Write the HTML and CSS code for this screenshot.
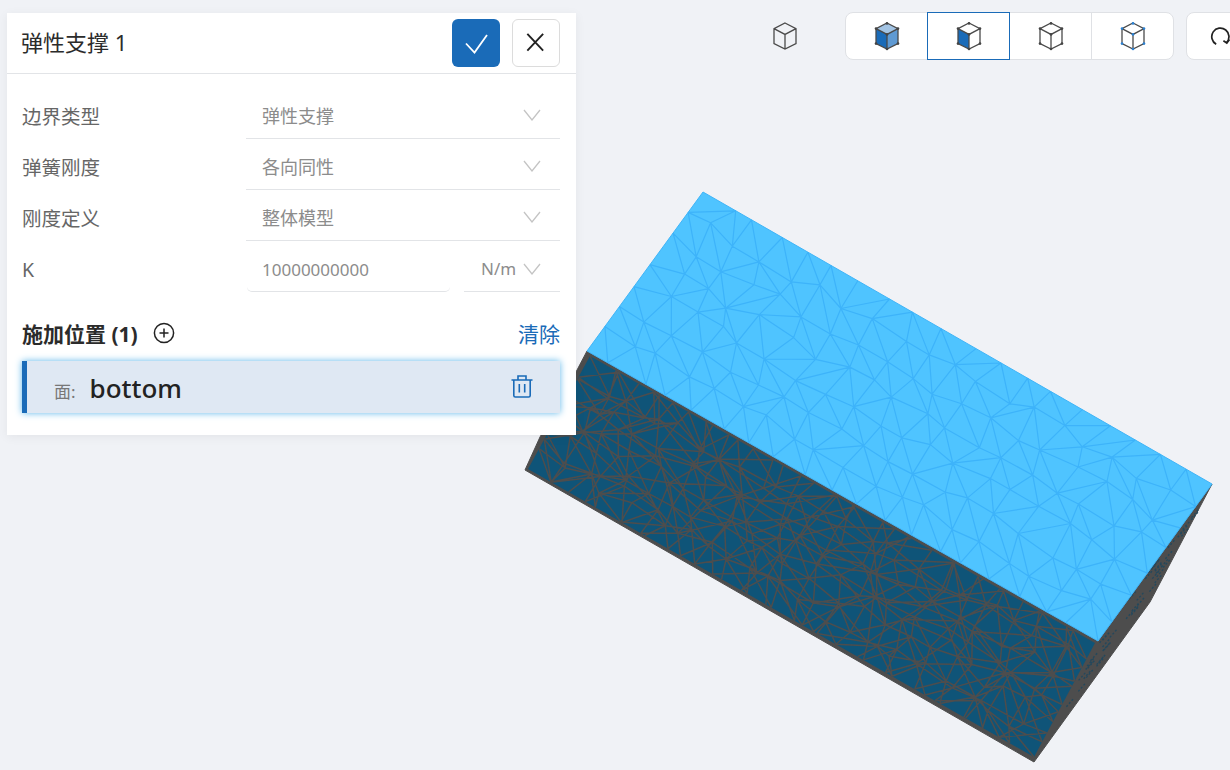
FILE: index.html
```html
<!DOCTYPE html>
<html lang="zh-CN">
<head>
  <meta charset="UTF-8" />
  <title>弹性支撑</title>
  <link rel="stylesheet" href="styles.css">
</head>
<body>

  <!-- 3d model -->
  <svg class="model" width="1230" height="770" viewBox="0 0 1230 770">
    <polygon class="side" points="587,351 1098,641 1212,484 1150,602 1034,762 525,470 540,437 576,372"/>
    <polygon id="frontFace" class="front" points="590,356 1095,643 1034,757 528,469"/>
    <path id="frontMesh" class="front-line"/>
    <path id="sideSpots" class="side-spot"/>
    <polygon class="top" points="587,351 703,192 1212,484 1098,641"/>
    <path id="topMesh" class="top-line"/>
  </svg>

  <!-- view toolbar -->
  <svg width="0" height="0" class="defs">
    <defs>
      <g id="cubeFrame">
        <path d="M12 1 23 6.6V21.6L12 27 1 21.6V6.6Z M1 6.6 12 12.4 23 6.6 M12 12.4V27"/>
      </g>
      <g id="cubeDots">
        <circle cx="12" cy="1.4" r="1.3"/><circle cx="23" cy="6.6" r="1.3"/><circle cx="23" cy="21.6" r="1.3"/>
        <circle cx="12" cy="27" r="1.3"/><circle cx="1" cy="21.6" r="1.3"/><circle cx="1" cy="6.6" r="1.3"/>
        <circle cx="12" cy="12.4" r="1.3"/>
      </g>
    </defs>
  </svg>

  <div class="view-bar">
    <svg class="cube cube-solo" viewBox="0 0 24 28"><use href="#cubeFrame"/></svg>
    <div class="view-group">
      <div class="view-cell">
        <svg class="cube" viewBox="0 0 24 28">
          <path class="f-top" d="M12 1 23 6.6 12 12.4 1 6.6Z"/>
          <path class="f-left" d="M1 6.6 12 12.4V27L1 21.6Z"/>
          <path class="f-right" d="M23 6.6 12 12.4V27L23 21.6Z"/>
          <use href="#cubeFrame"/><use href="#cubeDots" class="dots"/>
        </svg>
      </div>
      <div class="view-cell active">
        <svg class="cube" viewBox="0 0 24 28">
          <path class="f-left" d="M1 6.6 12 12.4V27L1 21.6Z"/>
          <use href="#cubeFrame"/><use href="#cubeDots" class="dots"/>
        </svg>
      </div>
      <div class="view-cell">
        <svg class="cube" viewBox="0 0 24 28"><use href="#cubeFrame"/><use href="#cubeDots" class="dots"/></svg>
      </div>
      <div class="view-cell">
        <svg class="cube" viewBox="0 0 24 28"><use href="#cubeFrame"/><use href="#cubeDots" class="dots blue"/></svg>
      </div>
    </div>
    <div class="spin-btn">
      <svg class="spin-icon" viewBox="0 0 24 24">
        <path d="M8.2 20.2A8.6 8.6 0 1 1 18.6 18.6"/>
        <path d="M21.4 15.6 18.8 19 15.4 16.8"/>
      </svg>
    </div>
  </div>

  <!-- settings panel -->
  <div class="panel">
    <div class="panel-head">
      <h2>弹性支撑 1</h2>
      <button class="btn-ok">
        <svg viewBox="0 0 48 48"><path d="M14 24.5 22.5 33.5 35 16"/></svg>
      </button>
      <button class="btn-close">
        <svg viewBox="0 0 48 48"><path d="M16 15.5 32.5 33 M32.5 15.5 16 33"/></svg>
      </button>
    </div>

    <div class="panel-body">
      <div class="row">
        <label>边界类型</label>
        <div class="select"><span>弹性支撑</span><svg class="chev" viewBox="0 0 18 12"><path d="M1 1 9 11 17 1"/></svg></div>
      </div>
      <div class="row">
        <label>弹簧刚度</label>
        <div class="select"><span>各向同性</span><svg class="chev" viewBox="0 0 18 12"><path d="M1 1 9 11 17 1"/></svg></div>
      </div>
      <div class="row">
        <label>刚度定义</label>
        <div class="select"><span>整体模型</span><svg class="chev" viewBox="0 0 18 12"><path d="M1 1 9 11 17 1"/></svg></div>
      </div>
      <div class="row">
        <label>K</label>
        <div class="number">10000000000</div>
        <div class="select unit"><span>N/m</span><svg class="chev" viewBox="0 0 18 12"><path d="M1 1 9 11 17 1"/></svg></div>
      </div>

      <div class="place-head">
        <strong>施加位置 (1)</strong>
        <svg class="add" viewBox="0 0 22 22"><circle cx="11" cy="11" r="9.6"/><path d="M11 6.5V15.5 M6.5 11H15.5"/></svg>
        <a class="clear">清除</a>
      </div>

      <div class="place-item">
        <span class="kind">面:</span>
        <span class="name">bottom</span>
        <svg class="trash" viewBox="0 0 24 24"><path d="M1.5 6H22.5 M8 6V2H16V6 M3.8 6V21.5Q3.8 23 5.3 23H18.7Q20.2 23 20.2 21.5V6 M9.3 10V18.5 M14.7 10V18.5"/></svg>
      </div>
    </div>
  </div>

  <script src="mesh.js"></script>
</body>
</html>
```

FILE: styles.css
```css
:root{
  --primary:#1a6bb8;
  --bg:#f0f2f6;
  --line:#e2e4e7;
}
*{box-sizing:border-box;margin:0;padding:0;font-family:"Noto Sans","Noto Sans CJK SC",sans-serif}
body{
  background:var(--bg);
  width:1230px;
  height:770px;
  overflow:hidden;
  position:relative;
}

/* model */
.model{position:absolute;left:0;top:0}
.side{fill:#4d4d4d;stroke:#4d4d4d;stroke-width:1}
.front{fill:#0f5478}
.front-line{fill:none;stroke:#4d4d4d;stroke-width:1.5}
.side-spot{fill:none;stroke:#24485c;stroke-width:1.4;stroke-dasharray:2 2}
.top{fill:#4fc4ff;stroke:#3fb4f7;stroke-width:1}
.top-line{fill:none;stroke:#3db3fa;stroke-width:1.2}

/* toolbar */
.defs{position:absolute}
.view-bar{
  position:absolute;
  left:773px;
  top:12px;
  display:flex;
  align-items:center;
  height:48px;
}
.cube{width:24px;height:28px;overflow:visible;margin-top:-1px}
.cube use{fill:none;stroke:#4a4a4a;stroke-width:1.3}
.cube .dots{fill:#444;stroke:none}
.cube .dots.blue{fill:#2a80d2}
.cube-solo{margin-right:48px}
.f-top{fill:#a3c4e4}
.f-left{fill:var(--primary)}
.f-right{fill:#5f9ad3}
.view-group{
  display:flex;
  width:329px;
  height:48px;
  background:#fff;
  border:1px solid #dfe1e5;
  border-radius:8px;
}
.view-cell{
  flex:1;
  display:flex;
  align-items:center;
  justify-content:center;
  border-right:1px solid #dfe1e5;
  margin:-1px 0;
}
.view-cell:last-child{border-right:none}
.view-cell.active{border:1px solid var(--primary);margin:-1px 0 -1px -1px}
.spin-btn{
  width:68px;
  height:48px;
  margin-left:12px;
  flex:none;
  display:flex;
  align-items:center;
  justify-content:center;
  background:#fff;
  border:1px solid #dfe1e5;
  border-radius:8px;
}
.spin-icon{width:24px;height:24px;fill:none;stroke:#222;stroke-width:1.7}

/* panel */
.panel{
  position:absolute;
  left:7px;
  top:13px;
  width:569px;
  height:422px;
  background:#fff;
  box-shadow:0 2px 10px rgba(0,0,0,.06);
}
.panel-head{
  display:flex;
  align-items:center;
  height:61px;
  padding:0 16px 1px 14px;
  border-bottom:1px solid var(--line);
}
.panel-head h2{flex:1;font-size:22px;font-weight:400;color:#2b2b2b;margin-top:-4px}
.panel-head button{
  width:48px;
  height:48px;
  border-radius:6px;
  display:flex;
  background:#fff;
  border:1px solid #dcdcdc;
}
.panel-head svg{width:100%;height:100%;fill:none}
.btn-ok{background:var(--primary)!important;border:none!important;margin-right:12px}
.btn-ok path{stroke:#fff;stroke-width:1.8}
.btn-close svg{margin:-1px}
.btn-close path{stroke:#222;stroke-width:2}
.panel-body{padding:14px 16px 0 15px}
.row{display:flex;height:51px}
.row label{
  width:224px;
  font-size:19.5px;
  line-height:57px;
  color:#666;
}
.select{
  flex:1;
  display:flex;
  align-items:center;
  justify-content:space-between;
  padding:3px 19px 0 16px;
  border-bottom:1px solid var(--line);
  color:#8c8c8c;
  font-size:18px;
}
.chev{width:18px;height:12px;margin-top:1px;fill:none;stroke:#c4c4c4;stroke-width:1.3}
.number{
  width:203px;
  margin-left:1px;
  padding:6px 0 0 15px;
  display:flex;
  align-items:center;
  border-bottom:1px solid var(--line);
  border-radius:0 0 5px 5px;
  color:#8c8c8c;
  font-size:17px;
}
.select.unit{flex:none;width:96px;margin-left:14px;padding:4px 19px 0 17px;font-size:17px}
.place-head{
  display:flex;
  align-items:center;
  height:34px;
  margin-top:24px;
}
.place-head strong{font-size:21px;font-weight:700;color:#2b2b2b}
.add{width:22px;height:22px;margin-left:15px;fill:none;stroke:#222;stroke-width:1.5}
.clear{margin-left:auto;font-size:21px;color:var(--primary)}
.place-item{
  display:flex;
  align-items:center;
  height:52px;
  margin-top:11px;
  padding:0 26px 0 27px;
  background:#dfe8f3;
  border-left:5px solid var(--primary);
  box-shadow:0 0 7px #5fb8ea;
}
.kind{font-size:17px;color:#777;margin-top:6px}
.name{font-size:26px;font-weight:500;color:#222;margin-left:14px;flex:1;margin-top:1px}
.trash{width:24px;height:24px;fill:none;stroke:var(--primary);stroke-width:1.6;margin-top:-3px}
```

FILE: mesh.js
```js
/* jittered triangle meshes for the faces of the box */
let seed = 7;
const rnd = () => {
  seed = (seed * 16807) % 2147483647;
  return seed / 2147483647;
};

/* a,b,c,d = corners going round the face */
const mapQuad = (a, b, c, d, u, v) => {
  const x1 = a[0] + (b[0] - a[0]) * u, y1 = a[1] + (b[1] - a[1]) * u;
  const x2 = d[0] + (c[0] - d[0]) * u, y2 = d[1] + (c[1] - d[1]) * u;
  return [x1 + (x2 - x1) * v, y1 + (y2 - y1) * v];
};

const meshPath = (a, b, c, d, nu, nv, jitter, flip) => {
  const pts = [];
  for (let i = 0; i <= nu; i++) {
    pts[i] = [];
    for (let j = 0; j <= nv; j++) {
      const ju = (i > 0 && i < nu) ? (rnd() - .5) * jitter : 0;
      const jv = (j > 0 && j < nv) ? (rnd() - .5) * jitter : 0;
      pts[i][j] = mapQuad(a, b, c, d, (i + ju) / nu, (j + jv) / nv);
    }
  }
  const seg = (p, q) => `M${p[0].toFixed(1)} ${p[1].toFixed(1)}L${q[0].toFixed(1)} ${q[1].toFixed(1)}`;
  let out = '';
  for (let i = 0; i <= nu; i++) {
    for (let j = 0; j <= nv; j++) {
      if (i < nu && j > 0 && j < nv) out += seg(pts[i][j], pts[i + 1][j]);
      if (j < nv && i > 0 && i < nu) out += seg(pts[i][j], pts[i][j + 1]);
      if (i < nu && j < nv) {
        if (rnd() < flip) out += seg(pts[i][j], pts[i + 1][j + 1]);
        else out += seg(pts[i + 1][j], pts[i][j + 1]);
      }
    }
  }
  return out;
};

/* top face, light blue */
document.getElementById('topMesh').setAttribute('d',
  meshPath([587, 351], [703, 192], [1212, 484], [1098, 641], 7, 19, .45, .22));

/* front face shows the front and the back mesh on top of each other */
const fa = [590, 356], fb = [1095, 643], fc = [1034, 757], fd = [528, 469];
document.getElementById('frontMesh').setAttribute('d',
  meshPath(fa, fb, fc, fd, 21, 6, .7, .65) + meshPath(fa, fb, fc, fd, 17, 5, .7, .35));

/* little dark marks on the grey side */
let spots = '';
for (let i = 0; i < 46; i++) {
  const t = rnd(), s = rnd();
  const p = mapQuad([1104, 632], [1205, 496], [1148, 596], [1050, 735], t, s * .9);
  spots += `M${p[0].toFixed(1)} ${p[1].toFixed(1)}l7 -8`;
}
document.getElementById('sideSpots').setAttribute('d', spots);
```
